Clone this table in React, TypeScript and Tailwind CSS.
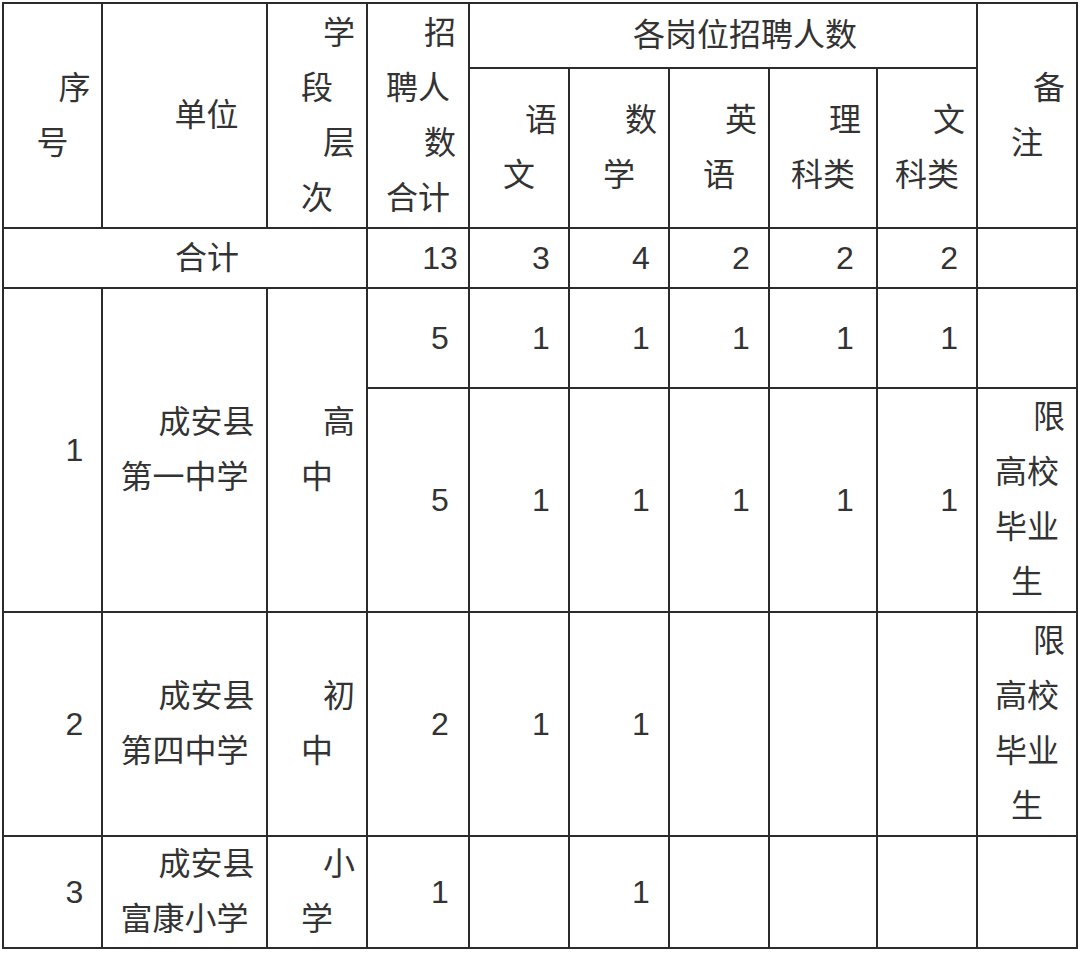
type Cell = {
  lines?: string[][];
  rowSpan?: number;
  colSpan?: number;
};

// each paragraph is a list of lines; first line of a paragraph is indented
function Para({ lines }: { lines: string[] }) {
  return (
    <p className="indent-[44px] text-center whitespace-nowrap">
      {lines.map((l, i) => (
        <span key={i}>
          {i > 0 && <br />}
          {l}
        </span>
      ))}
    </p>
  );
}

function Td({ lines, rowSpan, colSpan }: Cell) {
  return (
    <td
      rowSpan={rowSpan}
      colSpan={colSpan}
      className="border-2 border-[#2b2b2b] px-[4px] py-0 align-middle"
    >
      {lines?.map((p, i) => <Para key={i} lines={p} />)}
    </td>
  );
}

const n = (v: string): Cell => ({ lines: [[v]] });
const e: Cell = {};

const cols = [
  'w-[99px]', 'w-[165px]', 'w-[100px]', 'w-[102px]', 'w-[100px]',
  'w-[100px]', 'w-[100px]', 'w-[108px]', 'w-[100px]', 'w-[100px]',
];

const rows: { h: string; cells: Cell[] }[] = [
  {
    h: 'h-[65px]',
    cells: [
      { lines: [['序', '号']], rowSpan: 2 },
      { lines: [['单位']], rowSpan: 2 },
      { lines: [['学', '段'], ['层', '次']], rowSpan: 2 },
      { lines: [['招', '聘人'], ['数', '合计']], rowSpan: 2 },
      { lines: [['各岗位招聘人数']], colSpan: 5 },
      { lines: [['备', '注']], rowSpan: 2 },
    ],
  },
  {
    h: 'h-[160px]',
    cells: [
      { lines: [['语', '文']] },
      { lines: [['数', '学']] },
      { lines: [['英', '语']] },
      { lines: [['理', '科类']] },
      { lines: [['文', '科类']] },
    ],
  },
  {
    h: 'h-[60px]',
    cells: [{ lines: [['合计']], colSpan: 3 }, n('13'), n('3'), n('4'), n('2'), n('2'), n('2'), e],
  },
  {
    h: 'h-[100px]',
    cells: [
      { lines: [['1']], rowSpan: 2 },
      { lines: [['成安县', '第一中学']], rowSpan: 2 },
      { lines: [['高', '中']], rowSpan: 2 },
      n('5'), n('1'), n('1'), n('1'), n('1'), n('1'), e,
    ],
  },
  {
    h: 'h-[224px]',
    cells: [n('5'), n('1'), n('1'), n('1'), n('1'), n('1'), { lines: [['限', '高校', '毕业', '生']] }],
  },
  {
    h: 'h-[224px]',
    cells: [
      n('2'),
      { lines: [['成安县', '第四中学']] },
      { lines: [['初', '中']] },
      n('2'), n('1'), n('1'), e, e, e,
      { lines: [['限', '高校', '毕业', '生']] },
    ],
  },
  {
    h: 'h-[112px]',
    cells: [
      n('3'),
      { lines: [['成安县', '富康小学']] },
      { lines: [['小', '学']] },
      n('1'), e, n('1'), e, e, e, e,
    ],
  },
];

export default function App() {
  return (
    <div className="w-[1080px] h-[954px] bg-white pl-[2px] pt-[2px] font-['Liberation_Sans','Noto_Sans_CJK_SC',sans-serif]">
      <table className="table-fixed border-collapse w-[1076px] text-[32px] leading-[55px] text-[#333]">
        <colgroup>
          {cols.map((c, i) => (
            <col key={i} className={c} />
          ))}
        </colgroup>
        <tbody>
          {rows.map((r, i) => (
            <tr key={i} className={r.h}>
              {r.cells.map((c, j) => (
                <Td key={j} {...c} />
              ))}
            </tr>
          ))}
        </tbody>
      </table>
    </div>
  );
}
